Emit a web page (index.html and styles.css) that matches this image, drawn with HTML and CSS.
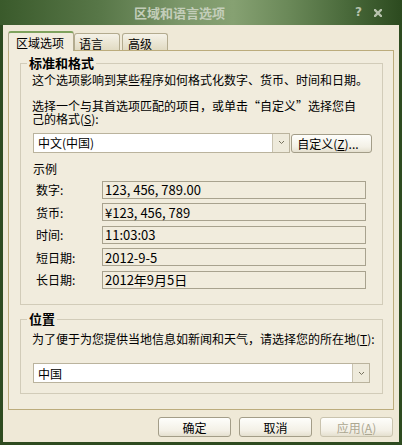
FILE: index.html
```html
<!DOCTYPE html>
<html lang="zh-CN">
<head>
    <meta charset="UTF-8">
    <meta name="viewport" content="width=device-width, initial-scale=1.0">
    <title>区域和语言选项</title>
    <link rel="stylesheet" href="styles.css">
</head>
<body>
    <div class="window">
        <div class="titlebar">
            <span class="title">区域和语言选项</span>
            <span class="caption-btns">
                <span class="help">?</span>
                <svg class="close" width="8" height="8" viewBox="0 0 8 8">
                    <path d="M1 1 L7 7 M7 1 L1 7" stroke="#b7c2ad" stroke-width="2.4" stroke-linecap="square"/>
                </svg>
            </span>
        </div>
        <div class="client">
            <div class="tabs">
                <div class="tab active">区域选项</div>
                <div class="tab">语言</div>
                <div class="tab last">高级</div>
            </div>
            <div class="panel">
                <fieldset class="group format">
                    <legend>标准和格式</legend>
                    <p class="desc">这个选项影响到某些程序如何格式化数字、货币、时间和日期。</p>
                    <p class="desc pick"><span class="line">选择一个与其首选项匹配的项目，或单击“自定义”选择您自</span><span class="line">己的格式(<u>S</u>):</span></p>
                    <div class="select-row">
                        <div class="combo short">
                            <span class="value">中文(中国)</span>
                            <span class="drop">
                                <svg width="5" height="3" viewBox="0 0 5 3"><path d="M0 0 L2.5 2.5 L5 0" fill="none" stroke="#76725f" stroke-width="1"/></svg>
                            </span>
                        </div>
                        <button class="btn custom">自定义(<u>Z</u>)...</button>
                    </div>
                    <div class="sample-title">示例</div>
                    <div class="samples">
                        <span class="label">数字:</span><div class="field">123, 456, 789.00</div>
                        <span class="label">货币:</span><div class="field">¥123, 456, 789</div>
                        <span class="label">时间:</span><div class="field">11:03:03</div>
                        <span class="label">短日期:</span><div class="field">2012-9-5</div>
                        <span class="label">长日期:</span><div class="field">2012年9月5日</div>
                    </div>
                </fieldset>
                <fieldset class="group location">
                    <legend>位置</legend>
                    <p class="desc">为了便于为您提供当地信息如新闻和天气，请选择您的所在地(<u>T</u>):</p>
                    <div class="combo long">
                        <span class="value">中国</span>
                        <span class="drop">
                            <svg width="5" height="3" viewBox="0 0 5 3"><path d="M0 0 L2.5 2.5 L5 0" fill="none" stroke="#76725f" stroke-width="1"/></svg>
                        </span>
                    </div>
                </fieldset>
            </div>
            <div class="buttons">
                <button class="btn">确定</button>
                <button class="btn">取消</button>
                <button class="btn disabled">应用(<u>A</u>)</button>
            </div>
        </div>
    </div>
</body>
</html>
```

FILE: styles.css
```css
body {
    margin: 0;
    font-family: "Noto Sans CJK SC", "Noto Sans", sans-serif;
    font-size: 12px;
    line-height: 13px;
    color: #000;
}
.window {
    width: 402px;
    height: 445px;
    display: flex;
    flex-direction: column;
    background: #2e4b20;
}
.titlebar {
    height: 25px;
    display: flex;
    align-items: center;
    background: linear-gradient(to right, #3a5a2b 0%, #587748 25%, #7c976a 45%, #86a172 58%, #6a8858 72%, #4a6a3b 86%, #2c4a1f 100%);
}
.title {
    flex: 1;
    padding: 1px 0 0 134px;
    font-size: 13px;
    font-weight: bold;
    line-height: 14px;
    color: #c3cdb9;
}
.caption-btns {
    width: 37px;
    display: flex;
    align-items: center;
    gap: 12px;
    padding-right: 10px;
}
.help {
    font-family: "DejaVu Sans", sans-serif;
    font-weight: bold;
    font-size: 12px;
    color: #b7c2ad;
}
.client {
    flex: 1;
    margin: 0 3px 3px 3px;
    background: #efe9d7;
    display: flex;
    flex-direction: column;
}
.tabs {
    display: flex;
    align-items: flex-end;
    height: 20px;
    margin: 6px 0 -1px 5px;
}
.tab {
    box-sizing: border-box;
    width: 46px;
    height: 17px;
    margin-bottom: 1px;
    padding: 3px 0 0 4px;
    border: 1px solid #b3ab8f;
    border-bottom: none;
    border-radius: 3px 3px 0 0;
    background: linear-gradient(#f5f2e8, #e1dac2);
}
.tab.last {
    margin-left: 2px;
    padding-left: 5px;
}
.tab.active {
    width: 66px;
    height: 20px;
    margin-bottom: 0;
    padding: 3px 0 0 7px;
    border-top: 2px solid #7fa35e;
    background: #f1ecdd;
    position: relative;
    z-index: 1;
}
.panel {
    height: 360px;
    margin: 0 5px;
    border: 1px solid #bcac7c;
    background: #f1ecdd;
    box-sizing: border-box;
    padding: 5px 10px 0 11px;
    display: flex;
    flex-direction: column;
    gap: 7px;
}
.group {
    margin: 0;
    padding: 0 10px 0 12px;
    border: 1px solid #d2ccb9;
    min-width: 0;
}
.group legend {
    margin-left: -6px;
    padding: 0 2px;
    font-size: 13px;
    font-weight: bold;
    line-height: 14px;
}
.format {
    height: 249px;
    box-sizing: border-box;
}
.location {
    height: 82px;
    box-sizing: border-box;
}
.desc {
    margin: 3px 0 0 -1px;
}
.desc.pick {
    margin-top: 13px;
    display: flex;
    flex-direction: column;
}
.desc .line {
    height: 12px;
    line-height: 14px;
    white-space: nowrap;
}
.desc .line + .line {
    margin-top: 0.5px;
}
.location .desc {
    margin-top: 6px;
    white-space: nowrap;
}
.select-row {
    display: flex;
    gap: 1px;
    margin-top: 9px;
}
.combo {
    box-sizing: border-box;
    height: 20px;
    border: 1px solid #bab39d;
    background: #fff;
    display: flex;
    align-items: center;
    justify-content: space-between;
}
.combo .value {
    padding-left: 4px;
}
.combo .drop {
    width: 17px;
    height: 18px;
    box-sizing: border-box;
    border-left: 1px solid #c9c3b0;
    background: #eeeadb;
    display: flex;
    align-items: center;
    justify-content: center;
}
.combo.short {
    width: 258px;
}
.combo.long {
    width: 337px;
    margin-top: 18px;
}
.btn {
    box-sizing: border-box;
    font-family: inherit;
    font-size: 12px;
    line-height: 13px;
    color: #000;
    border: 1px solid #a39d88;
    border-radius: 3px;
    background: linear-gradient(#fefefb, #f3f0e6 70%, #e5e0cf);
    padding: 0;
}
.btn.custom {
    width: 81px;
    height: 19px;
    margin-top: 1px;
    text-align: left;
    padding-left: 5px;
}
.sample-title {
    margin-top: 9px;
}
.samples {
    display: grid;
    grid-template-columns: 69px 264px;
    grid-auto-rows: 18px;
    row-gap: 4.5px;
    margin-top: 6px;
}
.samples .label {
    padding-left: 3px;
    align-self: center;
}
.field {
    box-sizing: border-box;
    border: 1px solid #a8a28e;
    padding: 0 0 0 2px;
    display: flex;
    align-items: center;
    font-size: 13px;
}
.buttons {
    display: flex;
    justify-content: flex-end;
    gap: 8px;
    padding: 7px 6px 0 0;
}
.buttons .btn {
    width: 73px;
    height: 20px;
}
.btn.disabled {
    color: #aca791;
    border-color: #c9c3ae;
}
```
